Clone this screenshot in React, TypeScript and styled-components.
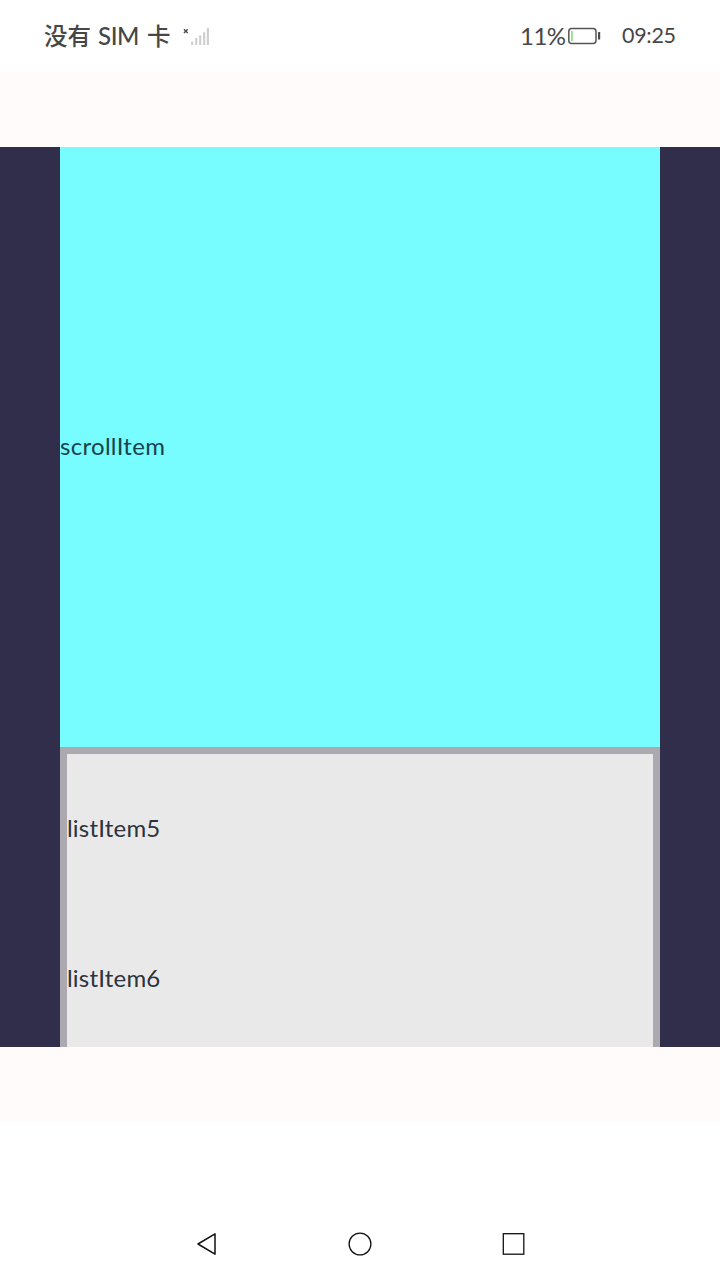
import React from 'react';
import styled, { createGlobalStyle } from 'styled-components';

const GlobalStyle = createGlobalStyle`
  * { box-sizing: border-box; }
  body {
    margin: 0;
    background: #ffffff;
    font-family: Lato, "Noto Sans CJK SC", sans-serif;
  }
`;

const Screen = styled.div`
  width: 720px;
  height: 1280px;
  display: flex;
  flex-direction: column;
  overflow: hidden;
  background: #ffffff;
`;

const StatusBar = styled.header`
  height: 72px;
  flex: none;
  display: flex;
  align-items: center;
  justify-content: space-between;
  padding: 0 44px;
  color: #474747;
`;

const StatusGroup = styled.div`
  display: flex;
  align-items: center;
  height: 100%;
`;

const StatusText = styled.span<{ $width: number; $size: number; $spacing?: number; $weight?: number }>`
  width: ${(p) => p.$width}px;
  font-size: ${(p) => p.$size}px;
  font-weight: ${(p) => p.$weight ?? 400};
  letter-spacing: ${(p) => p.$spacing ?? 0}px;
  line-height: 34px;
  padding-bottom: 1px;
  white-space: nowrap;
`;

const Clock = styled(StatusText)`
  margin-left: 21px;
  padding-bottom: 2px;
`;

const Page = styled.main`
  height: 1049px;
  flex: none;
  padding: 75px 0 74px;
  background: #fffbfa;
`;

const Scroller = styled.section`
  height: 900px;
  padding: 0 60px;
  background: #312e4c;
  overflow: hidden;
  font-size: 24px;
  line-height: 30px;
`;

const ScrollItem = styled.div`
  height: 600px;
  display: flex;
  align-items: center;
  padding-bottom: 2px;
  background: #77fdff;
  color: #18434d;
  letter-spacing: 0.3px;
`;

const List = styled.ul`
  margin: 0;
  padding: 0;
  height: 320px;
  list-style: none;
  border: 7px solid #aca9b1;
  background: #e9e9e9;
  color: #2c333e;
  letter-spacing: 0.2px;
`;

const ListItem = styled.li`
  height: 150px;
  display: flex;
  align-items: center;
  padding-bottom: 2px;
`;

const NavBar = styled.nav`
  margin-top: auto;
  height: 72px;
  display: flex;
  align-items: center;
  justify-content: center;
  gap: 129.5px;
`;

const Icon = styled.svg`
  display: block;
  flex: none;
`;

const SignalIcon = () => (
  <Icon width="27" height="20" viewBox="0 0 27 20">
    <path d="M.9 3.2l3.8 3.8M4.7 3.2L.9 7" stroke="#474747" strokeWidth="1.3" />
    <path
      d="M9.2 15.5V19M13.2 12V19M17.2 9.5V19M21.2 6.2V19M24.9 2V19"
      stroke="#cecece"
      strokeWidth="2.1"
    />
  </Icon>
);

const BatteryIcon = () => (
  <Icon width="33" height="18" viewBox="0 0 33 18">
    <rect x=".8" y="1.6" width="27.2" height="15" rx="3" fill="none" stroke="#555555" strokeWidth="1.5" />
    <rect x="3" y="3.8" width="2" height="10.5" rx=".8" fill="#a3df96" />
    <rect x="30" y="5" width="2.2" height="7.6" rx=".6" fill="#4b4b4b" />
  </Icon>
);

export default function App() {
  return (
    <>
      <GlobalStyle />
      <Screen>
        <StatusBar>
          <StatusGroup>
            <StatusText $width={54} $size={23.5} $weight={500}>没有</StatusText>
            <StatusText $width={49} $size={24} $spacing={-0.4} $weight={500}>SIM</StatusText>
            <StatusText $width={36} $size={23.5} $weight={500}>卡</StatusText>
            <SignalIcon />
          </StatusGroup>
          <StatusGroup>
            <StatusText $width={48} $size={24} $spacing={-0.5}>11%</StatusText>
            <BatteryIcon />
            <Clock $width={54} $size={21.5} $spacing={-0.3}>09:25</Clock>
          </StatusGroup>
        </StatusBar>
        <Page>
          <Scroller>
            <ScrollItem>scrollItem</ScrollItem>
            <List>
              <ListItem>listItem5</ListItem>
              <ListItem>listItem6</ListItem>
            </List>
          </Scroller>
        </Page>
        <NavBar>
          <Icon width="24" height="24" viewBox="0 0 24 24" fill="none" stroke="#111111" strokeWidth="1.5">
            <path d="M3 12L20 1.8V22.2Z" strokeLinejoin="round" />
          </Icon>
          <Icon width="24" height="24" viewBox="0 0 24 24" fill="none" stroke="#111111" strokeWidth="1.3">
            <circle cx="12" cy="12" r="10.9" />
          </Icon>
          <Icon width="24" height="24" viewBox="0 0 24 24" fill="none" stroke="#111111" strokeWidth="1.3">
            <rect x="1.3" y="1.7" width="20.5" height="20.5" />
          </Icon>
        </NavBar>
      </Screen>
    </>
  );
}
